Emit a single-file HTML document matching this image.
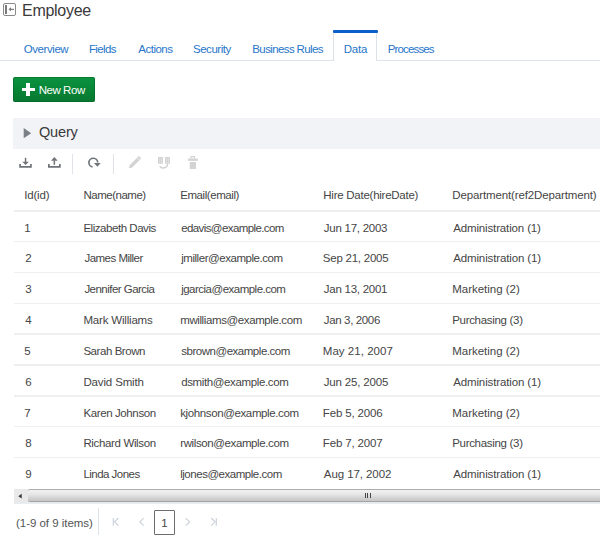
<!DOCTYPE html>
<html><head><meta charset="utf-8">
<style>
html,body{margin:0;padding:0;background:#fff;}
body{width:600px;height:541px;overflow:hidden;position:relative;font-family:"Liberation Sans",sans-serif;}
.t{position:absolute;white-space:pre;line-height:20px;font-family:"Liberation Sans",sans-serif;}
.a{position:absolute;}
</style></head><body>
<!-- back icon -->
<div class="a" style="left:3px;top:3px;width:11px;height:11px;border:1px solid #8a8a8a;border-radius:2px;"></div>
<div class="a" style="left:5px;top:5px;width:2px;height:9px;background:#7a7a7a;"></div>
<svg class="a" style="left:0;top:0" width="20" height="20"><path d="M8.5 9.3 L11 7.3 L11 11.3 Z" fill="#777"/><rect x="10" y="8.8" width="4" height="1.1" fill="#777"/></svg>
<!-- tabs line -->
<div class="a" style="left:0;top:60px;width:334px;height:1px;background:#dfe4ea;"></div>
<div class="a" style="left:377px;top:60px;width:223px;height:1px;background:#dfe4ea;"></div>
<div class="a" style="left:333.4px;top:30px;width:41.6px;height:30.5px;border-left:1.5px solid #dde2e8;border-right:1.5px solid #dde2e8;"></div>
<div class="a" style="left:333.3px;top:30px;width:44.5px;height:3px;background:#0b5fc8;border-radius:1px;"></div>
<!-- new row button -->
<div class="a" style="left:12.8px;top:76.8px;width:82.5px;height:25.2px;border-radius:2px;background:linear-gradient(#0a9340,#07782f);box-shadow:inset 0 0 0 1px rgba(0,80,20,.35);"></div>
<div class="a" style="left:21.5px;top:88px;width:13px;height:3.3px;background:#fff;"></div>
<div class="a" style="left:26.1px;top:83.1px;width:3.6px;height:12.9px;background:#fff;"></div>
<!-- query bar -->
<div class="a" style="left:13px;top:117.6px;width:587px;height:31.7px;background:#f2f3f7;"></div>
<svg class="a" style="left:0;top:110px" width="40" height="40"><path d="M23.7 18 L31.2 23.2 L23.7 28.3 Z" fill="#7b7f86"/></svg>
<!-- toolbar -->
<svg class="a" style="left:0;top:140px" width="220" height="40">
 <g fill="#6f7378">
  <path d="M19.2 24 h1.7 v2 h9.2 v-2 h1.7 v3.7 h-12.6 z"/>
  <rect x="24.8" y="17.8" width="1.5" height="5"/>
  <path d="M22.3 21.7 L28.8 21.7 L25.55 24.9 Z"/>
  <path d="M48 24 h1.7 v2 h9.3 v-2 h1.7 v3.7 h-12.7 z"/>
  <rect x="53.6" y="20.5" width="1.5" height="4.3"/>
  <path d="M51 20.8 L57.7 20.8 L54.35 17.1 Z"/>
 </g>
 <rect x="72" y="14" width="1" height="20.2" fill="#dfe3e8"/>
 <rect x="113" y="14" width="1" height="20.2" fill="#dfe3e8"/>
 <path d="M92.6 27 A4.4 4.4 0 1 1 97.7 22.6" fill="none" stroke="#6f7378" stroke-width="1.7"/>
 <path d="M94 23 L100.7 23 L97.35 26.8 Z" fill="#6f7378"/>
 <path d="M128.8 28.2 L129.9 25.1 L138.9 16.1 L141.2 18.4 L132.2 27.4 Z" fill="#d3d3d3"/><path d="M137.3 17.7 L139.6 20" stroke="#fff" stroke-width="0.6"/>
 <g fill="none" stroke="#d2d2d2" stroke-width="1">
  <rect x="158.5" y="17.5" width="3.9" height="5.8"/>
  <rect x="165.5" y="17.5" width="3.9" height="5.8"/>
 </g>
 <path d="M159.7 26.2 Q161 28.3 163.5 28 Q167.6 27.6 167.5 23.8" fill="none" stroke="#d2d2d2" stroke-width="1.4"/>
 <g fill="#e4e4e4">
  <rect x="159" y="18" width="2.9" height="4.8"/><rect x="166" y="18" width="2.9" height="4.8"/>
 </g>
 <g fill="#cfcfcf">
  <rect x="158.5" y="19.6" width="3.9" height="0.6"/><rect x="158.5" y="21.3" width="3.9" height="0.6"/>
  <rect x="165.5" y="19.6" width="3.9" height="0.6"/><rect x="165.5" y="21.3" width="3.9" height="0.6"/>
  <rect x="160.2" y="17.5" width="0.6" height="5.8"/><rect x="167.2" y="17.5" width="0.6" height="5.8"/>
 </g>
 <g fill="#d4d4d4">
  <path d="M190.4 16 h4.6 v2.5 h-1.2 v-1.3 h-2.2 v1.3 h-1.2 z"/>
  <rect x="188" y="18.5" width="9.8" height="2.4"/>
  <rect x="189.7" y="22" width="6.3" height="7"/>
 </g>
</svg>
<!-- table lines -->
<div id="lines"></div>
<div class="a" style="left:13.5px;top:210.10px;width:587px;height:1.5px;background:#efefef;"></div>
<div class="a" style="left:13.5px;top:240.92px;width:587px;height:1.5px;background:#efefef;"></div>
<div class="a" style="left:13.5px;top:271.74px;width:587px;height:1.5px;background:#efefef;"></div>
<div class="a" style="left:13.5px;top:302.56px;width:587px;height:1.5px;background:#efefef;"></div>
<div class="a" style="left:13.5px;top:333.38px;width:587px;height:1.5px;background:#efefef;"></div>
<div class="a" style="left:13.5px;top:364.20px;width:587px;height:1.5px;background:#efefef;"></div>
<div class="a" style="left:13.5px;top:395.02px;width:587px;height:1.5px;background:#efefef;"></div>
<div class="a" style="left:13.5px;top:425.84px;width:587px;height:1.5px;background:#efefef;"></div>
<div class="a" style="left:13.5px;top:456.66px;width:587px;height:1.5px;background:#efefef;"></div>
<!-- scrollbar -->
<div class="a" style="left:13.8px;top:489.4px;width:586.2px;height:13.4px;background:#e9e9e9;"></div>
<svg class="a" style="left:0;top:480px" width="40" height="30"><path d="M18.3 16.2 L21.7 13.8 L21.7 18.6 Z" fill="#333"/></svg>
<div class="a" style="left:28.2px;top:489.4px;width:571.8px;height:12.9px;border-top:1.2px solid #acacac;border-bottom:1.2px solid #a4a4a4;box-sizing:border-box;background:linear-gradient(#f2f2f2,#e6e6e6 40%,#d2d2d2 75%,#c6c6c6);border-radius:2px 0 0 2px;"></div>
<div class="a" style="left:13.8px;top:502.5px;width:586px;height:1.2px;background:#e6eef3;"></div>
<div class="a" style="left:365px;top:492.8px;width:1.2px;height:5.2px;background:#444;"></div>
<div class="a" style="left:367.2px;top:492.8px;width:1.2px;height:5.2px;background:#444;"></div>
<div class="a" style="left:369.6px;top:492.8px;width:1.2px;height:5.2px;background:#444;"></div>
<!-- pagination -->
<div class="a" style="left:98.3px;top:508.3px;width:1px;height:26.7px;background:#dde3ea;"></div>
<svg class="a" style="left:100px;top:505px" width="130" height="36">
 <g fill="none" stroke="#c9d0d8" stroke-width="1.1">
  <path d="M13.3 13 V20.7"/><path d="M18.3 13 L14.5 16.85 L18.3 20.7"/>
  <path d="M43.7 13.2 L39.8 16.95 L43.7 20.7"/>
  <path d="M85.7 13.2 L89.6 16.95 L85.7 20.7"/>
  <path d="M111.3 13 L115.1 16.85 L111.3 20.7"/><path d="M116.3 13 V20.7"/>
 </g>
</svg>
<div class="a" style="left:154.2px;top:510.1px;width:20.5px;height:24.5px;border:1px solid #6d6d6d;box-sizing:border-box;border-radius:1px;"></div>
<div class="t" style="left:22.00px;top:1.20px;font-size:16px;color:#3a3a3a;letter-spacing:-0.286px">Employee</div>
<div class="t" style="left:23.75px;top:38.68px;font-size:11.5px;color:#2776c9;letter-spacing:-0.429px">Overview</div>
<div class="t" style="left:89.00px;top:38.68px;font-size:11.5px;color:#2776c9;letter-spacing:-0.650px">Fields</div>
<div class="t" style="left:138.30px;top:38.68px;font-size:11.5px;color:#2776c9;letter-spacing:-0.500px">Actions</div>
<div class="t" style="left:193.00px;top:38.68px;font-size:11.5px;color:#2776c9;letter-spacing:-0.471px">Security</div>
<div class="t" style="left:252.30px;top:38.68px;font-size:11.5px;color:#2776c9;letter-spacing:-0.615px">Business Rules</div>
<div class="t" style="left:343.70px;top:38.68px;font-size:11.5px;color:#2776c9;letter-spacing:-0.233px">Data</div>
<div class="t" style="left:387.70px;top:38.68px;font-size:11.5px;color:#2776c9;letter-spacing:-0.850px">Processes</div>
<div class="t" style="left:38.70px;top:80.47px;font-size:11.5px;color:#ffffff;letter-spacing:-0.450px">New Row</div>
<div class="t" style="left:39.00px;top:122.42px;font-size:14.5px;color:#3a3a3a;letter-spacing:-0.175px">Query</div>
<div class="t" style="left:24.30px;top:185.38px;font-size:11.5px;color:#454545;letter-spacing:-0.200px">Id(id)</div>
<div class="t" style="left:83.50px;top:185.38px;font-size:11.5px;color:#454545;letter-spacing:-0.500px">Name(name)</div>
<div class="t" style="left:180.20px;top:185.38px;font-size:11.5px;color:#454545;letter-spacing:-0.427px">Email(email)</div>
<div class="t" style="left:323.30px;top:185.38px;font-size:11.5px;color:#454545;letter-spacing:-0.256px">Hire Date(hireDate)</div>
<div class="t" style="left:452.30px;top:185.38px;font-size:11.5px;color:#454545;letter-spacing:-0.132px">Department(ref2Department)</div>
<div class="t" style="left:24.30px;top:217.57px;font-size:11.5px;color:#454545;letter-spacing:0.000px">1</div>
<div class="t" style="left:83.40px;top:217.57px;font-size:11.5px;color:#454545;letter-spacing:-0.457px">Elizabeth Davis</div>
<div class="t" style="left:181.20px;top:217.57px;font-size:11.5px;color:#454545;letter-spacing:-0.594px">edavis@example.com</div>
<div class="t" style="left:323.80px;top:217.57px;font-size:11.5px;color:#454545;letter-spacing:-0.255px">Jun 17, 2003</div>
<div class="t" style="left:453.20px;top:217.57px;font-size:11.5px;color:#454545;letter-spacing:-0.141px">Administration (1)</div>
<div class="t" style="left:25.30px;top:248.40px;font-size:11.5px;color:#454545;letter-spacing:0.000px">2</div>
<div class="t" style="left:84.40px;top:248.40px;font-size:11.5px;color:#454545;letter-spacing:-0.509px">James Miller</div>
<div class="t" style="left:181.20px;top:248.40px;font-size:11.5px;color:#454545;letter-spacing:-0.456px">jmiller@example.com</div>
<div class="t" style="left:322.80px;top:248.40px;font-size:11.5px;color:#454545;letter-spacing:-0.236px">Sep 21, 2005</div>
<div class="t" style="left:453.20px;top:248.40px;font-size:11.5px;color:#454545;letter-spacing:-0.129px">Administration (1)</div>
<div class="t" style="left:25.30px;top:279.22px;font-size:11.5px;color:#454545;letter-spacing:0.000px">3</div>
<div class="t" style="left:84.40px;top:279.22px;font-size:11.5px;color:#454545;letter-spacing:-0.529px">Jennifer Garcia</div>
<div class="t" style="left:181.20px;top:279.22px;font-size:11.5px;color:#454545;letter-spacing:-0.511px">jgarcia@example.com</div>
<div class="t" style="left:323.80px;top:279.22px;font-size:11.5px;color:#454545;letter-spacing:-0.255px">Jan 13, 2001</div>
<div class="t" style="left:452.20px;top:279.22px;font-size:11.5px;color:#454545;letter-spacing:-0.017px">Marketing (2)</div>
<div class="t" style="left:25.30px;top:310.04px;font-size:11.5px;color:#454545;letter-spacing:0.000px">4</div>
<div class="t" style="left:83.40px;top:310.04px;font-size:11.5px;color:#454545;letter-spacing:-0.183px">Mark Williams</div>
<div class="t" style="left:180.20px;top:310.04px;font-size:11.5px;color:#454545;letter-spacing:-0.390px">mwilliams@example.com</div>
<div class="t" style="left:323.80px;top:310.04px;font-size:11.5px;color:#454545;letter-spacing:-0.360px">Jan 3, 2006</div>
<div class="t" style="left:452.20px;top:310.04px;font-size:11.5px;color:#454545;letter-spacing:-0.308px">Purchasing (3)</div>
<div class="t" style="left:24.30px;top:340.86px;font-size:11.5px;color:#454545;letter-spacing:0.000px">5</div>
<div class="t" style="left:83.40px;top:340.86px;font-size:11.5px;color:#454545;letter-spacing:-0.440px">Sarah Brown</div>
<div class="t" style="left:181.20px;top:340.86px;font-size:11.5px;color:#454545;letter-spacing:-0.471px">sbrown@example.com</div>
<div class="t" style="left:322.80px;top:340.86px;font-size:11.5px;color:#454545;letter-spacing:0.036px">May 21, 2007</div>
<div class="t" style="left:452.20px;top:340.86px;font-size:11.5px;color:#454545;letter-spacing:-0.017px">Marketing (2)</div>
<div class="t" style="left:25.30px;top:371.68px;font-size:11.5px;color:#454545;letter-spacing:0.000px">6</div>
<div class="t" style="left:83.40px;top:371.68px;font-size:11.5px;color:#454545;letter-spacing:-0.140px">David Smith</div>
<div class="t" style="left:181.20px;top:371.68px;font-size:11.5px;color:#454545;letter-spacing:-0.376px">dsmith@example.com</div>
<div class="t" style="left:323.80px;top:371.68px;font-size:11.5px;color:#454545;letter-spacing:-0.182px">Jun 25, 2005</div>
<div class="t" style="left:453.20px;top:371.68px;font-size:11.5px;color:#454545;letter-spacing:-0.129px">Administration (1)</div>
<div class="t" style="left:24.30px;top:402.50px;font-size:11.5px;color:#454545;letter-spacing:0.000px">7</div>
<div class="t" style="left:83.40px;top:402.50px;font-size:11.5px;color:#454545;letter-spacing:-0.383px">Karen Johnson</div>
<div class="t" style="left:180.20px;top:402.50px;font-size:11.5px;color:#454545;letter-spacing:-0.379px">kjohnson@example.com</div>
<div class="t" style="left:322.80px;top:402.50px;font-size:11.5px;color:#454545;letter-spacing:-0.160px">Feb 5, 2006</div>
<div class="t" style="left:452.20px;top:402.50px;font-size:11.5px;color:#454545;letter-spacing:-0.017px">Marketing (2)</div>
<div class="t" style="left:25.30px;top:433.32px;font-size:11.5px;color:#454545;letter-spacing:0.000px">8</div>
<div class="t" style="left:83.40px;top:433.32px;font-size:11.5px;color:#454545;letter-spacing:-0.354px">Richard Wilson</div>
<div class="t" style="left:180.20px;top:433.32px;font-size:11.5px;color:#454545;letter-spacing:-0.389px">rwilson@example.com</div>
<div class="t" style="left:322.80px;top:433.32px;font-size:11.5px;color:#454545;letter-spacing:-0.160px">Feb 7, 2007</div>
<div class="t" style="left:452.20px;top:433.32px;font-size:11.5px;color:#454545;letter-spacing:-0.308px">Purchasing (3)</div>
<div class="t" style="left:25.30px;top:464.13px;font-size:11.5px;color:#454545;letter-spacing:0.000px">9</div>
<div class="t" style="left:83.40px;top:464.13px;font-size:11.5px;color:#454545;letter-spacing:-0.520px">Linda Jones</div>
<div class="t" style="left:180.20px;top:464.13px;font-size:11.5px;color:#454545;letter-spacing:-0.471px">ljones@example.com</div>
<div class="t" style="left:323.80px;top:464.13px;font-size:11.5px;color:#454545;letter-spacing:-0.073px">Aug 17, 2002</div>
<div class="t" style="left:453.20px;top:464.13px;font-size:11.5px;color:#454545;letter-spacing:-0.129px">Administration (1)</div>
<div class="t" style="left:16.00px;top:512.68px;font-size:11.5px;color:#555555;letter-spacing:-0.033px">(1-9 of 9 items)</div>
<div class="t" style="left:161.30px;top:513.18px;font-size:11.5px;color:#454545;letter-spacing:0.000px">1</div>
</body></html>
